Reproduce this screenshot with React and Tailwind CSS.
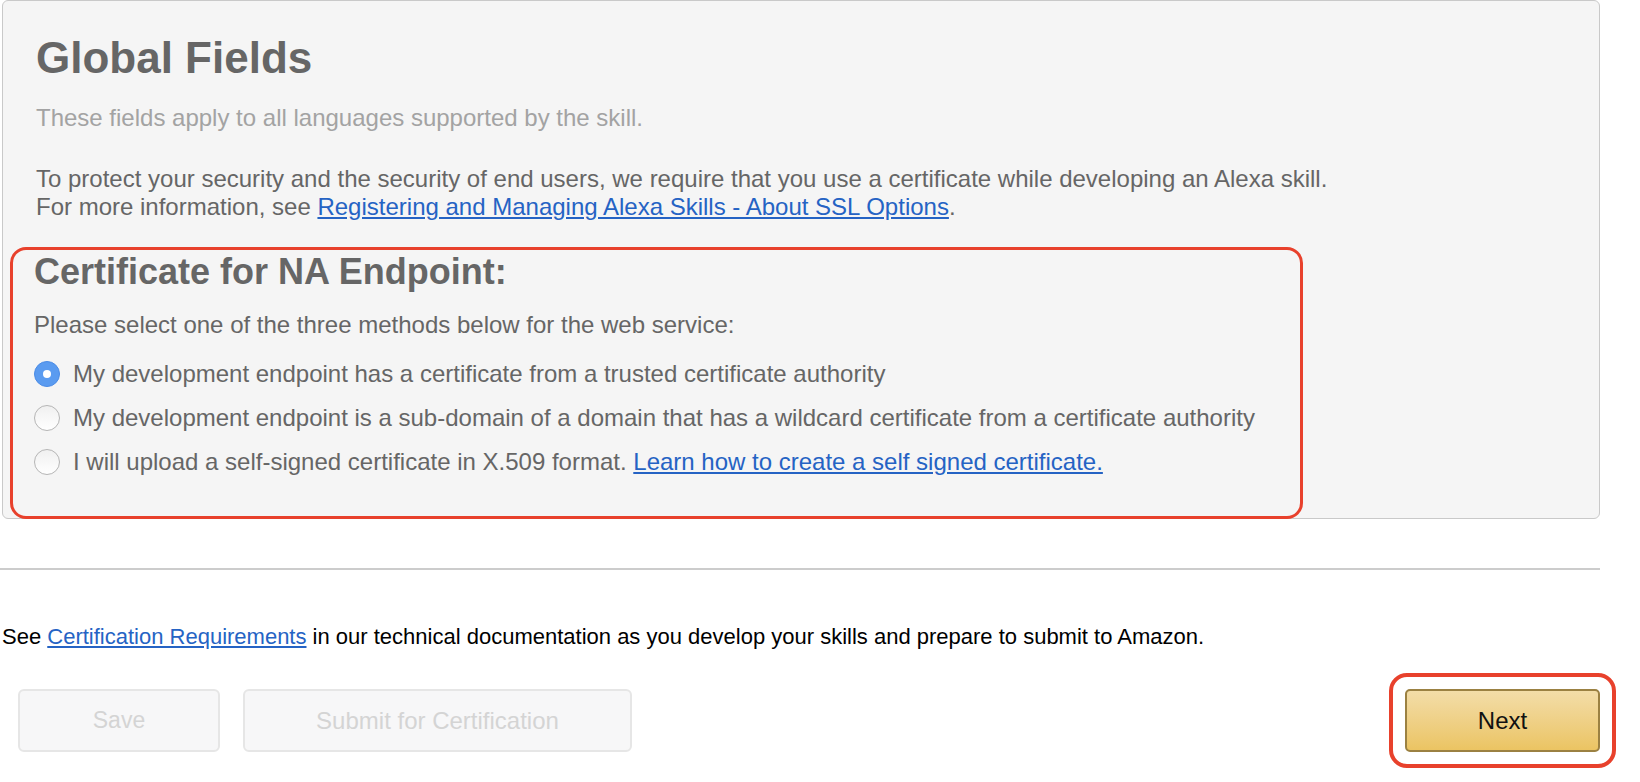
import React from 'react';

const Radio = ({ checked }) => (
    checked ? (
        <span className="w-[26px] h-[26px] rounded-full bg-[#5a9bf0] border border-[#4a8be6] flex items-center justify-center shrink-0">
            <span className="w-[8px] h-[8px] rounded-full bg-white"></span>
        </span>
    ) : (
        <span className="w-[26px] h-[26px] rounded-full bg-gradient-to-b from-[#f0f0f0] to-white border border-[#b5b5b5] shrink-0"></span>
    )
);

const App = () => {
    const options = [
        { id: 1, checked: true, text: 'My development endpoint has a certificate from a trusted certificate authority' },
        { id: 2, checked: false, text: 'My development endpoint is a sub-domain of a domain that has a wildcard certificate from a certificate authority' },
    ];

    return (
        <div className="w-[1640px] h-[782px] bg-white font-['Liberation_Sans',Arial,sans-serif] overflow-hidden">
            {/* Global fields panel */}
            <div className="ml-[2px] w-[1598px] bg-[#f5f5f5] border border-[#c9c9c9] rounded-md px-[33px] pt-[31px]">
                <h1 className="text-[44px] leading-[52px] font-bold text-[#666666]">Global Fields</h1>
                <p className="mt-[20px] text-[24px] leading-[28px] text-[#a3a3a3]">
                    These fields apply to all languages supported by the skill.
                </p>
                <p className="mt-[33px] text-[24px] leading-[28px] text-[#666666]">
                    To protect your security and the security of end users, we require that you use a certificate while developing an Alexa skill.
                    <br />
                    For more information, see <a href="#" className="text-[#2563c4] underline">Registering and Managing Alexa Skills - About SSL Options</a>.
                </p>

                {/* Certificate section (highlighted) */}
                <div className="mt-[26px] -ml-[26px] w-[1293px] border-[3px] border-[#e8412c] rounded-[16px] pl-[21px] pt-[1px] pb-[32px] -mb-[1px]">
                    <h2 className="text-[36px] leading-[42px] font-bold text-[#666666]">Certificate for NA Endpoint:</h2>
                    <p className="mt-[18px] text-[24px] leading-[28px] text-[#666666]">
                        Please select one of the three methods below for the web service:
                    </p>
                    <div className="mt-[13px] flex flex-col">
                        {options.map((o) => (
                            <label key={o.id} className="h-[44px] flex items-center gap-[13px] text-[24px] text-[#666666]">
                                <Radio checked={o.checked} />
                                <span>{o.text}</span>
                            </label>
                        ))}
                        <label className="h-[44px] flex items-center gap-[13px] text-[24px] text-[#666666]">
                            <Radio checked={false} />
                            <span>
                                I will upload a self-signed certificate in X.509 format.{' '}
                                <a href="#" className="text-[#2563c4] underline">Learn how to create a self signed certificate.</a>
                            </span>
                        </label>
                    </div>
                </div>
            </div>

            <div className="mt-[49px] w-[1600px] h-[2px] bg-[#cccccc]"></div>

            <p className="mt-[54px] pl-[2px] text-[22px] leading-[26px] text-black">
                See <a href="#" className="text-[#2563c4] underline">Certification Requirements</a> in our technical documentation as you develop your skills and prepare to submit to Amazon.
            </p>

            <div className="mt-[23px] w-[1616px] flex items-center justify-between">
                <div className="flex items-center gap-[23px] pl-[18px]">
                    <button className="w-[202px] h-[63px] rounded-md bg-[#f7f7f8] border-2 border-[#e6e6e6] text-[23px] text-[#d4d4d4]">Save</button>
                    <button className="w-[389px] h-[63px] rounded-md bg-[#f7f7f8] border-2 border-[#e6e6e6] text-[24px] text-[#d4d4d4]">Submit for Certification</button>
                </div>
                <div className="border-[4px] border-[#e8412c] rounded-[18px] p-[12px]">
                    <button className="w-[195px] h-[63px] rounded-[5px] border-2 border-[#9b8142] bg-gradient-to-b from-[#f3dda8] to-[#ebc462] text-[24px] text-[#111111]">Next</button>
                </div>
            </div>
        </div>
    );
};

export default App;
